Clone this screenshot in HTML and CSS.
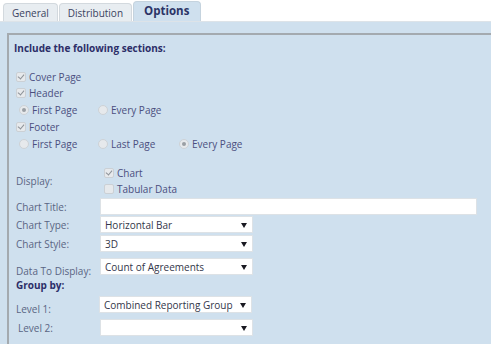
FILE: index.html
```html
<!DOCTYPE html>
<html lang="en">
<head>
    <title>Report Options</title>
    <link rel="stylesheet" href="styles.css">
</head>
<body>
    <div class="tabs">
        <span class="tab">General</span>
        <span class="tab">Distribution</span>
        <span class="tab active">Options</span>
    </div>
    <div class="panel">
        <div class="box">
            <h3>Include the following sections:</h3>
            <div class="sections">
                <div class="opt"><span class="cb on"></span>Cover Page</div>
                <div class="opt"><span class="cb on"></span>Header</div>
                <div class="radios">
                    <span class="rd-item w1"><span class="rd on"></span>First Page</span>
                    <span class="rd-item"><span class="rd"></span>Every Page</span>
                </div>
                <div class="opt"><span class="cb on"></span>Footer</div>
                <div class="radios">
                    <span class="rd-item w1"><span class="rd"></span>First Page</span>
                    <span class="rd-item w2"><span class="rd"></span>Last Page</span>
                    <span class="rd-item"><span class="rd on"></span>Every Page</span>
                </div>
            </div>

            <div class="row display">
                <label>Display:</label>
                <div class="checks">
                    <div class="opt"><span class="cb on"></span>Chart</div>
                    <div class="opt"><span class="cb"></span>Tabular Data</div>
                </div>
            </div>
            <div class="row">
                <label>Chart Title:</label>
                <div class="field wide"></div>
            </div>
            <div class="row">
                <label>Chart Type:</label>
                <div class="field sel">Horizontal Bar<span class="arrow"></span></div>
            </div>
            <div class="row gap">
                <label>Chart Style:</label>
                <div class="field sel">3D<span class="arrow"></span></div>
            </div>
            <div class="row low data">
                <label>Data To Display:</label>
                <div class="field sel">Count of Agreements<span class="arrow"></span></div>
            </div>
            <h4>Group by:</h4>
            <div class="row low lvl1">
                <label>Level 1:</label>
                <div class="field sel">Combined Reporting Group<span class="arrow"></span></div>
            </div>
            <div class="row lvl2">
                <label>Level 2:</label>
                <div class="field sel"><span class="arrow"></span></div>
            </div>
        </div>
    </div>
</body>
</html>
```

FILE: styles.css
```css
* {
    margin: 0;
    padding: 0;
    box-sizing: border-box;
}
body {
    background: #ffffff;
    font-family: "Open Sans", "Noto Sans", sans-serif;
    font-size: 10px;
    color: #4b4f7e;
    overflow: hidden;
    height: 344px;
}
.tabs {
    display: flex;
    align-items: flex-end;
    height: 22px;
    padding-left: 3px;
    border-bottom: 1px solid #dde3e8;
}
.tab {
    display: flex;
    align-items: center;
    justify-content: center;
    height: 18px;
    padding: 0 8px;
    margin-right: 1px;
    background: #e8edf1;
    border: 1px solid #d3d9de;
    border-bottom: none;
    border-radius: 4px 4px 0 0;
    color: #3a4260;
}
.tab.active {
    height: 20px;
    margin-right: 0;
    padding: 0 11px 2px 10px;
    background: #cfe0ee;
    border-color: #c5d3de;
    font-size: 11.5px;
    font-weight: 700;
    color: #2c3466;
}
.panel {
    background: #cfe0ee;
    padding: 11px 0 0 7px;
    height: 322px;
}
.box {
    border-left: 2px solid #a4aaaf;
    border-top: 2px solid #a4aaaf;
    height: 100%;
    padding: 5px 0 0 5px;
}
h3 {
    font-size: 10px;
    font-weight: 700;
    line-height: 16px;
    color: #2c2e68;
    margin-bottom: 13px;
}
h4 {
    font-size: 10px;
    font-weight: 700;
    line-height: 12px;
    color: #2c2e68;
    margin: 4px 0 5px 2px;
}
.sections {
    padding-left: 2px;
}
.opt {
    display: flex;
    align-items: center;
    height: 16px;
}
.cb {
    width: 10px;
    height: 10px;
    margin-right: 3px;
    background: #e6e9ec;
    border: 1px solid #cbd0d5;
    border-radius: 2px;
    position: relative;
}
.cb.on::after {
    content: '';
    position: absolute;
    left: 2px;
    top: 0;
    width: 3px;
    height: 5px;
    border-right: 1.5px solid #8d9298;
    border-bottom: 1.5px solid #8d9298;
    transform: rotate(40deg);
}
.radios {
    display: flex;
    align-items: center;
    height: 18px;
    padding-left: 3px;
}
.rd-item {
    display: flex;
    align-items: center;
}
.rd-item.w1 {
    width: 79px;
}
.rd-item.w2 {
    width: 81px;
}
.rd {
    width: 10px;
    height: 10px;
    margin-right: 3px;
    border-radius: 50%;
    background: #e6e9ec;
    border: 1px solid #cdd2d6;
    position: relative;
}
.rd.on::after {
    content: '';
    position: absolute;
    left: 2px;
    top: 2px;
    width: 4px;
    height: 4px;
    border-radius: 50%;
    background: #9a9fa4;
}
.row {
    display: flex;
    align-items: center;
    margin-bottom: 1px;
    padding-left: 2px;
}
.row label {
    width: 84px;
    color: #5a6583;
}
.display {
    margin-top: 12px;
}
.checks .opt {
    padding-left: 4px;
}
.gap {
    margin-top: 2px;
}
.field {
    height: 17px;
    background: #ffffff;
    border: 1px solid #dde2e6;
}
.field.wide {
    width: 377px;
}
.field.sel {
    width: 153px;
    display: flex;
    align-items: center;
    padding-left: 4px;
    color: #33364a;
    position: relative;
}
.arrow {
    position: absolute;
    right: 5px;
    top: 6px;
    border-left: 3px solid transparent;
    border-right: 3px solid transparent;
    border-top: 5px solid #1a1a22;
}
.low {
    align-items: flex-end;
}
.data {
    margin-top: 6px;
}
.data label {
    line-height: 12px;
    margin-bottom: -2px;
}
.lvl1 label {
    margin-bottom: -3px;
}
.lvl1 .field {
    margin-left: -1px;
}
.lvl2 {
    margin-top: 6px;
}
.lvl2 label {
    padding-left: 2px;
}
```
